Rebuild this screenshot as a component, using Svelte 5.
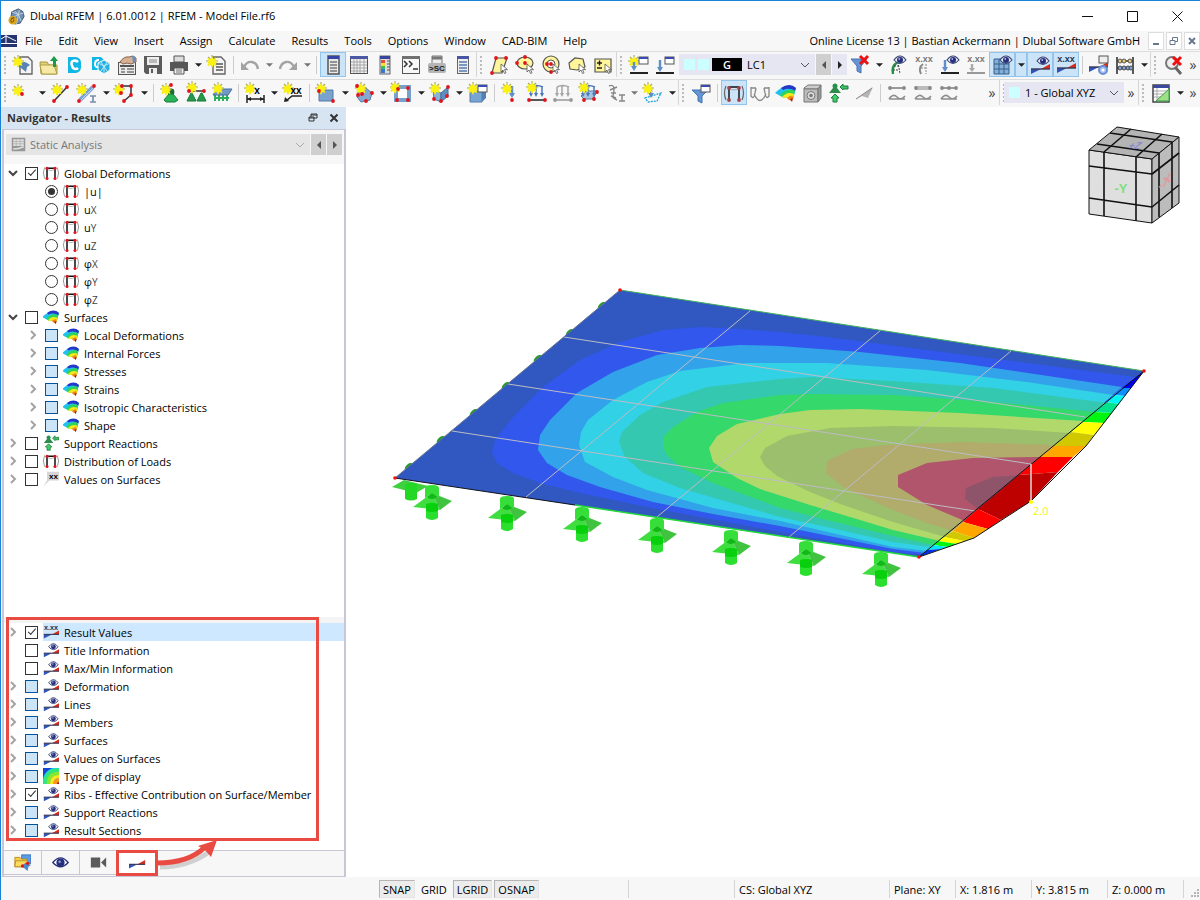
<script>
  const star = (x, y) =>
    `<path d="M${x} ${y - 6}v12M${x - 6} ${y}h12M${x - 4} ${y - 4}l8 8M${x + 4} ${y - 4}l-8 8" stroke="#a8a25a" stroke-width="1.100"/><path d="M${x} ${y - 5}l1.400 3 3-1-1 3 2 1-2 1 1 3-3-1-1.400 3-1.400-3-3 1 1-3-2-1 2-1-1-3 3 1z" fill="#fbf212"/>`;
  const dot = (x, y, c = '#e0141c') => `<circle cx="${x}" cy="${y}" r="1.900" fill="${c}"/>`;
  const line = (d, c = '#333', w = 1.5) => `<path d="${d}" fill="none" stroke="${c}" stroke-width="${w}"/>`;
  const fill = (d, c, s = 'none') => `<path d="${d}" fill="${c}" stroke="${s}"/>`;
  const win = (x, y) =>
    `<rect x="${x}" y="${y}" width="9" height="7" fill="#fff" stroke="#555"/><rect x="${x}" y="${y}" width="9" height="2" fill="#3949b8"/>`;
  const eye = (x, y) =>
    `<path d="M${x - 6} ${y}q6-8 12 0q-6 7-12 0z" fill="#e9ebf6" stroke="#3a4276" stroke-width="1.100"/><circle cx="${x}" cy="${y}" r="3" fill="#26307a"/><circle cx="${x - 0.7}" cy="${y - 1}" r=".9" fill="#aab4ea"/>`;
  const wedge = (x, y) =>
    fill(`M${x} ${y}h10l-10 5z`, '#2f55bd') + fill(`M${x + 10} ${y}l9-5v5z`, '#d92b1a') + line(`M${x} ${y}h19`, '#3a3a55', 1.4);
  const xxx = (x, y, c = '#444') =>
    `<text x="${x}" y="${y}" font-size="9" font-weight="700" fill="${c}" text-anchor="middle" font-family="Liberation Sans">x.xx</text>`;
  const cursor = (x, y) => `<path d="M${x} ${y}v8l2-2 1.5 3.5 1.5-.7-1.5-3.2h3z" fill="#fff" stroke="#555" stroke-width=".8"/>`;
  const yel = (d) => `<path d="${d}" fill="#fff59a" stroke="#555" stroke-width="1.2"/>`;
  const frameShape = (c = '#111', side = '#999') =>
    line('M4 5q-3 7 0 14M20 5q3 7 0 14', side, 1.2) + line('M7 19V6M17 6v13M7 6h10', c, 1.9) + line('M8 8q4 2 8 0', '#aaa', 1);
  const rainbow =
    fill('M1 12Q8 5 13 5q5-1 9 2l-3 11q-5-2-9-1z', '#1fc2ee') +
    fill('M7 7q4-3 8-3t7 3l-1 3q-6-4-12-1z', '#2638c8') +
    fill('M6 14q5-5 9-5 4-1 6 1l-2 8q-5-2-9-1z', '#2fd357') +
    fill('M8 16q4-4 7-4t5 1l-1 5q-5-2-9-1z', '#f3ea1c') +
    fill('M13 17q3-3 6-2l-1 5-3-1z', '#f58418') +
    fill('M16 18l3-1-1 4z', '#b51a1a');
  const support =
    `<circle cx="9" cy="5" r="2.500" fill="#24924a"/>` + fill('M3 12l4-5h4l4 5z', '#2e8c4c') +
    fill('M14 6l3-3v2h5v3h-5v1z', '#3fc168', '#1d7b3a') + fill('M9 13l4 4h-2v4H7v-4H5z', '#3fd06c', '#1d7b3a');
  const loads = (c = '#4a78b8') =>
    line('M6 6q5-3 12 0M6 6v8M11 5v9M17 6v8', c, 1.5) + fill('M4 12h4l-2 4zM9 12h4l-2 4zM15 12h4l-2 4z', c);
  const diag = (m) => line('M4 7h16', '#999', 2) + m + line('M4 18q4-6 8-2t8-1M4 18h16', '#8d8d8d', 1.6);
  const sheet = (x = 8) => `<path d="M${x} 4h8l4 4v13h-12z" fill="#f4f4f4" stroke="#666" stroke-width="1.4"/>`;
  const mark = (x, y, t) => `<text x="${x}" y="${y}" font-size="10" font-weight="700" font-family="Liberation Sans" text-anchor="middle">${t}</text>`;

  const icons = {
    new: sheet(9) + fill('M6 13q6-6 10-3l3 2-3 2-1 5-5-4z', '#5784b4') + star(7, 8),
    open: fill('M3 9h7l2 3h8v9H4z', '#e3d173', '#a8983f') + fill('M3 12h14l3 9H5z', '#f5e9a5', '#b0a04b') + fill('M17 3l4 5h-2v6h-3V8h-3z', '#1c9a4a'),
    center: fill('M5 4h8q5 1 5 6v4q0 5-5 6H5z', '#10b6e4') + line('M15 9q-2-2-5-1t0 7q3 2 5 0', '#fff', 2.6),
    globe: fill('M3 4h9l4 4-3 9H3z', '#10b6e4') + line('M10 7q-4 0-4 4t4 3', '#fff', 2) + fill('M15 7l6 3v7l-6 4-6-4v-7z', '#27afe0', '#fff') + line('M9 10l6 3 6-3M15 13v8M12 9l6 9M18 9l-6 9', '#c9effc', 0.9),
    hand: `<rect x="3.500" y="9.500" width="17" height="12" fill="#ececec" stroke="#555"/>` + line('M5 13h14', '#555', 2) + line('M6 16h4M6 19h4M12 16h7M12 19h7', '#777', 1.3) + fill('M5 9q4-6 9-5l4-1 3 2v4l-5 2-4-1-4 1z', '#d8b093', '#84644e') + fill('M17 3l4 1v5l-3 1z', '#6b8eb8'),
    save: fill('M3 3h18v18H5l-2-2z', '#5b5b5b') + fill('M6 4h12v8H6zM8 15h8v6H8z', '#eee') + line('M8 7h8M8 9h8', '#888', 1) + fill('M10 16h2v4h-2z', '#5b5b5b'),
    print: fill('M7 3h10v6H7z', '#ddd', '#555') + fill('M3 9h18v9H3z', '#565656') + fill('M7 15h10v6H7z', '#eee', '#555') + line('M9 17h6M9 19h6', '#777', 1),
    report: sheet(8) + line('M11 11h7M11 14h7M11 17h7', '#555', 1.3) + star(7, 8),
    undo: line('M6 14q3-6 8-5t6 7', '#a3a3a3', 2.4) + fill('M3 9v8h8z', '#a3a3a3'),
    redo: line('M18 14q-3-6-8-5t-6 7', '#a3a3a3', 2.4) + fill('M21 9v8h-8z', '#a3a3a3'),
    nav: `<rect x="7" y="3" width="11" height="18" fill="#e8e8e8" stroke="#555" stroke-width="1.5"/><rect x="7" y="3" width="11" height="3" fill="#3545a5"/>` + line('M9 9h7M9 12h7M9 15h7M9 18h7', '#777', 1.4),
    table: `<rect x="3.500" y="3.500" width="17" height="17" fill="#f1f1f1" stroke="#555"/><rect x="3" y="3" width="18" height="3" fill="#4d59a5"/>` + line('M4 9h16M4 12h16M4 15h16M4 18h16M7 6v14M10 6v14M13 6v14M17 6v14', '#999', 0.8),
    panel: `<rect x="7" y="3" width="10" height="18" fill="#ddd" stroke="#666"/><rect x="7" y="3" width="10" height="3" fill="#39459b"/>` + fill('M8 7h4v3H8z', '#e54a3c') + fill('M8 10h4v3H8z', '#f3df35') + fill('M8 13h4v3H8z', '#39bd57') + fill('M8 16h4v4H8z', '#3978d2') + line('M14 8h3M14 11h3M14 14h3M14 17h3', '#555', 1.2),
    console: `<rect x="3.500" y="3.500" width="17" height="17" fill="#f7f7f7" stroke="#555"/><rect x="3" y="3" width="18" height="3" fill="#707070"/>` + line('M5 8l3 3-3 3M10 8l3 3-3 3M14 16h5', '#333', 1.5),
    script: fill('M7 3h10v8H7z', '#eee', '#777') + line('M7 5h10', '#777', 3) + `<rect x="3" y="10" width="18" height="10" rx="2" fill="#b5b5b5"/>` + `<text x="12" y="18" font-size="8" font-weight="700" text-anchor="middle" fill="#222" font-family="Liberation Sans">&gt;SC</text>`,
    list: `<rect x="6.500" y="3.500" width="11" height="17" fill="#eee" stroke="#666"/><rect x="6" y="3" width="12" height="3" fill="#4954a5"/>` + line('M8 9h8M8 12h8M8 15h8M8 18h8', '#5679b0', 1.4),
    selRhomb: yel('M9 5h11l-5 15H5z') + dot(9, 5) + dot(19, 5) + dot(5, 20) + cursor(14, 11),
    selEllipse: `<ellipse cx="12" cy="10" rx="8" ry="6" fill="#fff59a" stroke="#555" stroke-width="1.2"/>` + dot(4, 10) + dot(12, 4) + dot(12, 10) + cursor(14, 11),
    selRing: `<circle cx="12" cy="11" r="8" fill="#fff59a" stroke="#555" stroke-width="1.2"/><circle cx="12" cy="11" r="4" fill="#fff" stroke="#555"/>` + dot(12, 11) + dot(8, 11) + dot(12, 19) + cursor(14, 11),
    selPoly: yel('M4 10l6-5 8 1 2 8-8 3-7-1z') + cursor(14, 11),
    selPlus: yel('M4 6h16v13H4z') + line('M6 10h5M8.500 7.500v5M6 15h5', '#222', 1.4) + cursor(14, 11),
    loadNew: star(7, 8) + line('M7 9v7', '#5f8fc8', 2.4) + fill('M4 13h6l-3 5z', '#5f8fc8') + line('M3 20h18', '#222', 2) + win(12, 4),
    load: line('M7 7v10', '#5f8fc8', 2.4) + fill('M4 14h6l-3 5z', '#5f8fc8') + line('M3 20h18', '#222', 2) + win(12, 4),
    filterX: fill('M3 6h16l-6 7v7l-4-2v-5z', '#6495d6', '#4775ae') + line('M12 3l8 8M20 3l-8 8', '#ee1010', 3),
    viewLoad: line('M12 9q-7 4-5 12', '#1d9444', 2.4) + `<path d="M12 9l2 12M8 13h5M7 17h6" fill="none" stroke="#444" stroke-dasharray="2 1"/>` + eye(14, 7),
    valLoad: xxx(12, 9, '#777') + line('M11 11q-5 4-2 10', '#888', 2) + `<path d="M14 11v10M9 15h5" fill="none" stroke="#888" stroke-dasharray="2 1"/>`,
    eyeDown: line('M7 7v10', '#5f8fc8', 2.4) + fill('M4 14h6l-3 5z', '#5f8fc8') + line('M3 20h18', '#222', 2) + eye(15, 7),
    valDown: xxx(12, 9, '#777') + line('M8 11v6', '#aaa', 2.4) + fill('M5 15h6l-3 4z', '#aaa') + line('M3 20h18', '#999', 2),
    gridEye: `<rect x="4" y="6" width="15" height="15" fill="#85afd6"/>` + line('M4 6h15v15H4zM9 6v15M14 6v15M4 11h15M4 16h15', '#35618f', 1) + eye(16, 7),
    wedgeEye: wedge(3, 16) + eye(15, 8),
    wedgeVal: wedge(3, 15) + xxx(12, 9, '#16375a'),
    wedgeGear: wedge(2, 14) + `<rect x="12" y="3" width="9" height="7" fill="#eee" stroke="#555"/><circle cx="16" cy="17" r="4" fill="#a9c5f2" stroke="#698ed2" stroke-width="2"/><circle cx="16" cy="17" r="1.500" fill="#fff"/>`,
    abacus: line('M4 4v17M20 4v17M4 8h16M4 15h16', '#333', 1.6) + [7, 11, 17].map((x) => `<circle cx="${x}" cy="8" r="2" fill="#e8ca75" stroke="#555"/>`).join('') + [7, 11, 15, 18].map((x) => `<circle cx="${x}" cy="15" r="2" fill="#86a5db" stroke="#444"/>`).join(''),
    zoomX: `<circle cx="11" cy="10" r="6" fill="#eee" stroke="#777" stroke-width="2"/>` + line('M14 14l6 7', '#666', 3) + line('M12 4l8 8M20 4l-8 8', '#ee1010', 3),
    node: star(7, 9) + dot(11, 13),
    lineNew: line('M5 20L18 6', '#333', 1.5) + star(8, 8) + dot(5, 20) + dot(18, 6),
    member: line('M5 19L18 6', '#79a1d5', 4) + line('M6 19L18 7', '#c6dbf2', 1) + dot(4, 20) + dot(19, 5) + star(7, 8) + line('M15 15h6M18 15v6M15 21h6', '#7b8fae', 1.7),
    polyline: line('M8 12V5h10v9L11 20', '#333', 1.5) + star(6, 8) + dot(8, 12) + dot(9, 5) + dot(18, 5) + dot(18, 14) + dot(11, 20),
    supNode: `<circle cx="13" cy="11" r="3.400" fill="#1c6b38"/>` + fill('M6 19l5-6h4l5 6-3 2H8z', '#27b557', '#167b37') + star(8, 8) + dot(13, 4),
    supLine: fill('M3 20l4-8h1l4 8zM13 20l4-8h1l4 8z', '#26984a', '#167b37') + line('M5 10h15', '#333', 1.5) + star(8, 6) + dot(5, 10) + dot(20, 10),
    supSurf: line('M5 14v6M9 14v6M13 14v6M17 14v6M4 17h15', '#2fae59', 2) + fill('M7 8h15l-4 6H3z', '#7199c9', '#466e9f') + star(8, 7),
    dim: line('M4 14v8M21 14v8M4 18h17', '#222', 1.5) + fill('M4 18l4-2v4zM21 18l-4-2v4z', '#222') + star(7, 7) + mark(14, 13, 'x'),
    dimXX: line('M5 20l6-5h10', '#222', 1.5) + fill('M3 21l1-5 4 4z', '#222') + star(7, 7) + mark(15, 13, 'xx'),
    surface: fill('M5 9h14v11H5z', '#79a2cf', '#557ba8') + star(7, 7) + dot(5, 10) + dot(19, 20),
    surfFree: fill('M6 10l8-3 6 5-2 7-9 2-4-5z', '#85aad2', '#557ba8') + star(9, 7) + dot(5, 5) + dot(10, 13) + dot(20, 12) + dot(14, 20) + dot(6, 14),
    opening: `<rect x="6" y="6" width="13" height="13" fill="#fff" stroke="#76a1cd" stroke-width="4"/>` + star(5, 6) + dot(8, 8) + dot(18, 7) + dot(7, 19) + dot(18, 19),
    solid: fill('M5 9l8 3v9l-7-3z', '#8ab2d6', '#537da8') + fill('M13 12l7-6v9l-7 6z', '#5e8ebf', '#426c9a') + star(7, 7) + dot(6, 18) + dot(20, 6) + dot(13, 20) + dot(19, 15),
    cube: fill('M4 10h12v11H4z', '#78a5d3', '#527da8') + fill('M16 10l4-3v10l-4 4z', '#5080b4') + star(7, 7) + win(12, 4),
    nodalLoad: line('M13 5v10', '#5f8fc8', 2.5) + fill('M10 12h6l-3 5z', '#5f8fc8') + star(8, 7) + dot(13, 19),
    memberLoad: loads() + line('M4 19h16', '#222', 1.5) + dot(4, 19) + dot(20, 19) + star(7, 6),
    memberLoadOff: loads('#a5a5a5') + line('M4 19h16', '#999', 1.5) + dot(4, 19, '#999') + dot(20, 19, '#999'),
    surfLoad: fill('M4 15l5-5h11l-4 8H7z', '#a8c6e4', '#547ca9') + loads() + star(7, 6) + dot(7, 19) + dot(17, 18) + dot(20, 11),
    wind: line('M6 5q5-2 5 3t-1 7 4 4M7 9l7-3M8 12h5M8 15l5 2', '#888', 1.4) + line('M16 14h6M19 14v6M16 20h6', '#888', 1.5),
    freeLoad: line('M10 7v7', '#5f8fc8', 2.4) + fill('M7 12h6l-3 5z', '#5f8fc8') + `<path d="M4 17l16-5-4 8-9 1z" fill="none" stroke="#1da2d5" stroke-width="1.300" stroke-dasharray="2 1"/>` + star(7, 7),
    filterWin: fill('M3 9h16l-6 6v7l-4-2v-5z', '#6495d6', '#4775ae') + win(12, 4),
    frame: frameShape() + dot(7, 6) + dot(17, 6) + dot(7, 19) + dot(17, 19),
    deform: frameShape('#3d424b', '#666') + [[7, 7], [17, 7], [7, 19], [17, 19]].map(([x, y]) => dot(x, y, '#a04048')).join(''),
    curve: line('M3 6v9q3 4 4-3l1-5M21 6v9q-3 4-4-3l-1-5M3 7h5M16 7h5M6 13q6 13 12 0', '#888', 1.3),
    rainbow,
    dice: fill('M4 7l4-3h13l-3 4H4z', '#ccc', '#777') + fill('M4 8h14v13H4z', '#bcbcbc', '#777') + fill('M18 8l3-4v13l-3 4z', '#999', '#777') + `<circle cx="11" cy="14.500" r="4" fill="#ddd" stroke="#777"/><circle cx="11" cy="14.500" r="1.800" fill="#777"/>`,
    support,
    plane: fill('M3 19L21 6l-5 11-6-2z', '#b5b5b5') + line('M4 18L20 7', '#8a8a8a', 1),
    diagA: diag(dot(5, 7, '#888') + dot(19, 7, '#888')),
    diagB: diag(fill('M4 5h16v4H4z', '#bbb') + dot(5, 7, '#888') + dot(19, 7, '#888')),
    diagC: diag([5, 12, 19].map((x) => dot(x, 7, '#888')).join('')),
    tableTri: `<rect x="4" y="4" width="16" height="17" fill="#fff" stroke="#444" stroke-width="1.500"/><rect x="4" y="4" width="16" height="3" fill="#3949a0"/>` + line('M5 10h14M5 13h14M5 16h14M8 7v13', '#aaa', 1) + fill('M7 20L20 8v12z', '#9ee08a', '#3f9e48'),
    valFlag: fill('M2 22L7 14V3h15v11H10z', '#d6d6d6') + mark(15, 12, 'xx'),
    display: fill('M0 0h24v24H0z', '#13d6f2') + `<g fill="none" stroke-width="5"><path d="M3 24Q3 3 24 3" stroke="#35e47a"/><path d="M8 24Q8 8 24 8" stroke="#85ea28"/><path d="M13 24Q13 13 24 13" stroke="#ffe71c"/><path d="M18 24Q18 18 24 18" stroke="#ff9418"/></g>` + fill('M0 0h14Q2 5 0 16z', '#1746d3') + fill('M21 24q0-3 3-3v3z', '#c0111d'),
    analysis: fill('M3 3h18v18H3z', '#777') + fill('M5 5h14v9H5z', '#ddd') + line('M5 8h14M5 11h14M9 5v9M14 5v9', '#999', 1) + line('M5 18q7 0 14-3', '#ddd', 2),
    project: fill('M11 3h11v10H11z', '#5b9be8', '#336eaf') + fill('M3 6h6l2 2h6v9H3z', '#f7cc46', '#b4861e') + fill('M4 10h14v7H3z', '#ffdc60', '#b4861e') + fill('M11 16l5-4 6 3-3 2-1 5z', '#4d88c8') + dot(12, 16) + dot(18, 13),
    eye: `<path d="M3 12q9-11 18 0q-9 10-18 0z" fill="#fff" stroke="#26307a" stroke-width="1.600"/><circle cx="12" cy="12" r="4.800" fill="#26307a"/><circle cx="11" cy="11" r="1.500" fill="#8b9be3"/>`,
    camera: fill('M3 6h11v12H3zM15 12l6-6v12z', '#5b5b5b'),
    wedge: wedge(2, 13)
  };

  // Toolbar rows: icon names, "v" = menu arrow, "|" = divider, "!" = pressed
  const rowOneA = 'new open center globe hand save print v report | undo vg redo vg | !nav table panel console script list'.split(' ');
  const rowOneB = ['selRhomb', 'selEllipse', 'selRing', 'selPoly', 'selPlus'];
  const rowOneC = ['loadNew', 'load'];
  const rowOneD = 'filterX v viewLoad valLoad eyeDown valDown !gridEye !v !wedgeEye !wedgeVal | wedgeGear abacus v'.split(' ');
  const rowTwoA = 'node v lineNew member v polyline v | supNode supLine supSurf | dim v dimXX | surface v surfFree v opening v solid v cube | nodalLoad memberLoad memberLoadOff surfLoad wind vg freeLoad v'.split(' ');
  const rowTwoB = 'filterWin | !deform curve rainbow dice support plane | diagA diagB diagC'.split(' ');

  const menus = ['File', 'Edit', 'View', 'Insert', 'Assign', 'Calculate', 'Results', 'Tools', 'Options', 'Window', 'CAD-BIM', 'Help'];

  const node = (label, icon, check, arrow = 'closed', level = 0, sub = '') => ({ label, icon, check, arrow, level, sub });
  const results = [
    node('Global Deformations', 'frame', 'on', 'open'),
    node('|u|', 'frame', 'radio-on', '', 1),
    node('u', 'frame', 'radio', '', 1, 'X'),
    node('u', 'frame', 'radio', '', 1, 'Y'),
    node('u', 'frame', 'radio', '', 1, 'Z'),
    node('φ', 'frame', 'radio', '', 1, 'X'),
    node('φ', 'frame', 'radio', '', 1, 'Y'),
    node('φ', 'frame', 'radio', '', 1, 'Z'),
    node('Surfaces', 'rainbow', 'off', 'open'),
    ...['Local Deformations', 'Internal Forces', 'Stresses', 'Strains', 'Isotropic Characteristics', 'Shape'].map((t) => node(t, 'rainbow', 'part', 'closed', 1)),
    node('Support Reactions', 'support', 'off'),
    node('Distribution of Loads', 'frame', 'off'),
    node('Values on Surfaces', 'valFlag', 'off')
  ];
  const options = [
    { ...node('Result Values', 'wedgeVal', 'on'), selected: true },
    node('Title Information', 'wedgeEye', 'off', ''),
    node('Max/Min Information', 'wedgeEye', 'off', ''),
    ...['Deformation', 'Lines', 'Members', 'Surfaces', 'Values on Surfaces'].map((t) => node(t, 'wedgeEye', 'part')),
    node('Type of display', 'display', 'part'),
    node('Ribs - Effective Contribution on Surface/Member', 'wedgeEye', 'on'),
    node('Support Reactions', 'wedgeEye', 'part'),
    node('Result Sections', 'wedgeEye', 'part')
  ];

  // Isobands on the plate, outermost first
  const bands = [
    ['#3257ed', '1144,371 1135,377 1027,363 927,350 827,337 780,332 740,329 700,327 663,330 620,342 580,360 543,387 513,417 495,440 492,453 497,463 513,473 540,483 580,493 647,507 780,532 893,552 922,555'],
    ['#32a3ea', '1122,387 960,363 860,352 780,346 740,345 700,348 657,355 613,372 577,393 550,420 540,435 538,450 547,463 567,475 600,487 653,502 713,514 780,526 893,549 925,553'],
    ['#32d1e6', '1113,395 1027,382 927,370 827,363 747,363 680,371 647,382 613,400 588,420 581,432 579,445 585,462 613,477 647,490 713,508 780,521 893,547 927,551'],
    ['#34c8b0', '1107,403 993,388 893,381 810,377 780,379 707,387 663,402 640,415 622,432 619,442 625,457 643,473 680,488 780,517 827,527 893,542 930,547'],
    ['#34d86b', '1094,412 993,402 893,395 810,394 780,395 723,403 697,412 673,427 663,437 663,447 667,455 680,467 713,483 780,508 827,520 893,536 933,545'],
    ['#b1d86b', '1083,421 960,413 860,409 810,410 780,414 737,424 717,436 709,448 713,462 737,478 760,489 810,505 860,520 893,530 940,541'],
    ['#9bbf6c', '1070,433 993,428 893,426 830,428 787,436 765,448 760,457 765,466 777,476 810,492 843,505 893,522 945,537'],
    ['#b1ac6b', '1055,445 960,442 887,445 852,449 827,461 826,473 843,487 860,495 893,510 927,523 953,531'],
    ['#b0556b', '1040,457 973,458 927,463 898,475 898,487 927,505 967,522'],
    ['#8e556a', '1020,475 993,477 966,488 965,499 978,509']
  ];
  // Cuts across the displaced free edge: plate side to outer side
  const cuts = [
    [1144, 371, 1144, 371], [1122, 388, 1131, 388], [1114, 395, 1125, 396], [1107, 402, 1119, 404], [1094, 412, 1112, 413],
    [1083, 422, 1104, 423], [1071, 432, 1094, 435], [1054, 446, 1086, 446], [1040, 457, 1073, 457], [1019, 475, 1058, 472],
    [978, 509, 1001, 520], [963, 522, 988, 529], [953, 531, 974, 538], [944, 537, 964, 541], [938, 541, 957, 544],
    [933, 545, 948, 547], [927, 550, 941, 549], [919, 557, 919, 557]
  ];
  const cutColors = ['#0000f0', '#0a90ff', '#00f4f4', '#00e28e', '#00f510', '#ffff00', '#d2c800', '#ffa600', '#ff0000', '#bd0000', '#ff0000', '#ffa600', '#d2c800', '#ffff00', '#00f510', '#00e8f4', '#0030ec'];
  const cells = cutColors.map((color, i) => {
    const a = cuts[i];
    const b = cuts[i + 1];
    const mid = i === 9 ? ' 1031,501' : '';
    return { color, points: `${a[0]},${a[1]} ${a[2]},${a[3]}${mid} ${b[2]},${b[3]} ${b[0]},${b[1]}` };
  });
  const supports = [[432, 485], [507, 496], [582, 507], [657, 518], [731, 530], [806, 541], [881, 552]];
  const bumps = [[602, 306], [570, 333], [538, 359], [506, 386], [474, 413], [441, 440], [409, 467]];
</script>

{#snippet tools(items)}
  {#each items as item}
    {@const pressed = item.startsWith('!')}
    {@const name = item.replace('!', '')}
    {#if name === '|'}
      <span class="divider"></span>
    {:else if name === 'v' || name === 'vg'}
      <button class="drop" class:pressed class:dim={name === 'vg'} aria-label="More"><svg viewBox="0 0 8 4"><path d="M0 0h8L4 4z" /></svg></button>
    {:else}
      <button class="tool" class:pressed aria-label={name}><svg viewBox="0 0 24 24">{@html icons[name]}</svg></button>
    {/if}
  {/each}
{/snippet}

{#snippet tree(items, name)}
  <ul class="tree">
    {#each items as it, i}
      <li class:nested={it.level}>
        <button class="twist {it.arrow}" aria-label="Expand" tabindex={it.arrow ? 0 : -1}>
          {#if it.arrow}<svg viewBox="0 0 12 12"><path d={it.arrow === 'open' ? 'M1 4l4 4 4-4' : 'M3 2l4 4-4 4'} /></svg>{/if}
        </button>
        {#if it.check.startsWith('radio')}
          <input type="radio" id="{name}{i}" name="component" checked={it.check === 'radio-on'} />
        {:else}
          <input type="checkbox" id="{name}{i}" class:part={it.check === 'part'} checked={it.check === 'on'} />
        {/if}
        <label for="{name}{i}" class:selected={it.selected}>
          <svg viewBox={it.icon === 'display' ? '0 0 24 24' : '2 2 20 20'}>{@html icons[it.icon]}</svg>
          <span>{it.label}{#if it.sub}<span class="sub">{it.sub}</span>{/if}</span>
        </label>
      </li>
    {/each}
  </ul>
{/snippet}

<div class="app">
  <header class="title">
    <svg class="logo" viewBox="0 0 18 18">
      <path d="M4 4l7-3 5 3 1 5-4 7-6 1-4-6z" fill="#6f8fb0" stroke="#39506c" />
      <path d="M4 4l7 3 6-2M11 7l-2 10M3 11l8-4 3 7M7 3l4 4 1-5" fill="none" stroke="#d6e4f0" stroke-width=".8" />
      <circle cx="5" cy="13" r="4.500" fill="#dda820" />
      <path d="M7 10q-4 0-4 3t2 2 1-3-2 0" fill="none" stroke="#754e08" />
    </svg>
    <h1>Dlubal RFEM | 6.01.0012 | RFEM - Model File.rf6</h1>
    <button aria-label="Minimize"><svg viewBox="0 0 11 11"><path d="M0 5.500h11" /></svg></button>
    <button aria-label="Maximize"><svg viewBox="0 0 11 11"><path d="M.5.5h10v10H.5z" /></svg></button>
    <button aria-label="Close"><svg viewBox="0 0 11 11"><path d="M.5.5l10 10M10.500.5l-10 10" /></svg></button>
  </header>

  <nav class="menu">
    <svg class="badge" viewBox="0 0 16 12"><path d="M0 0h16v12H0z" fill="#25336f" /><path d="M0 8.500h16M5 0v8M0 4l5-3 10 5" stroke="#fff" fill="none" stroke-width="1" /></svg>
    {#each menus as m}<button>{m}</button>{/each}
    <span class="license">Online License 13 | Bastian Ackermann | Dlubal Software GmbH</span>
    <span class="mdis">
      <button class="mdi" aria-label="Minimize model"><svg viewBox="0 0 10 10"><path d="M2 8h6" stroke-width="2" /></svg></button>
      <button class="mdi" aria-label="Restore model"><svg viewBox="0 0 10 10"><path d="M1 4.500h5v4H1zM3.500 4V1.500h5v4H6" /></svg></button>
      <button class="mdi" aria-label="Close model"><svg viewBox="0 0 10 10"><path d="M2 2l6 6M8 2L2 8" stroke-width="2" /></svg></button>
    </span>
  </nav>

  <div class="bar">
    <div class="group">{@render tools(rowOneA)}</div>
    <div class="group">{@render tools(rowOneB)}</div>
    <div class="group grow">
      {@render tools(rowOneC)}
      <div class="case">
        <i></i><i></i><b>G</b>
        <select aria-label="Load case"><option>LC1</option></select>
        <svg viewBox="0 0 10 6"><path d="M1 1l4 4 4-4" /></svg>
      </div>
      <button class="step off" aria-label="Previous"><svg viewBox="0 0 4 8"><path d="M4 0v8L0 4z" /></svg></button>
      <button class="step" aria-label="Next"><svg viewBox="0 0 4 8"><path d="M0 0v8l4-4z" /></svg></button>
      {@render tools(rowOneD)}
    </div>
    <div class="group">{@render tools(['zoomX'])}<button class="more">»</button></div>
  </div>

  <div class="bar">
    <div class="group">{@render tools(rowTwoA)}</div>
    <div class="group grow">{@render tools(rowTwoB)}<button class="more last">»</button></div>
    <div class="group">
      <div class="case axes">
        <i></i>
        <select aria-label="Coordinate system"><option>1 - Global XYZ</option></select>
        <svg viewBox="0 0 10 6"><path d="M1 1l4 4 4-4" /></svg>
      </div>
      <button class="more">»</button>
    </div>
    <div class="group">{@render tools(['tableTri', 'v'])}<button class="more">»</button></div>
  </div>

  <div class="work">
    <aside>
      <div class="head">
        <h2>Navigator - Results</h2>
        <button aria-label="Float"><svg viewBox="0 0 10 10"><path d="M1 4h5v4H1zM3 4V1h6v4H6M3 2h6M1 5h5" /></svg></button>
        <button aria-label="Close navigator"><svg viewBox="0 0 10 10"><path d="M1.500 1.500l7 7M8.500 1.500l-7 7" stroke-width="2" /></svg></button>
      </div>
      <div class="panel">
        <div class="analysis">
          <div class="pick">
            <svg class="pic" viewBox="2 2 20 20">{@html icons.analysis}</svg>
            <select aria-label="Analysis" disabled><option>Static Analysis</option></select>
            <svg class="chev" viewBox="0 0 10 6"><path d="M1 1l4 4 4-4" /></svg>
          </div>
          <button class="step off" aria-label="Previous analysis"><svg viewBox="0 0 4 8"><path d="M4 0v8L0 4z" /></svg></button>
          <button class="step off" aria-label="Next analysis"><svg viewBox="0 0 4 8"><path d="M0 0v8l4-4z" /></svg></button>
        </div>
        <div class="upper">{@render tree(results, 'result')}</div>
        <div class="lower">{@render tree(options, 'option')}<div class="callout"></div></div>
        <div class="tabs">
          {#each ['project', 'eye', 'camera', 'wedge'] as t}
            <button class:marked={t === 'wedge'} aria-label={t}><svg viewBox="2 2 20 20">{@html icons[t]}</svg></button>
          {/each}
          <svg class="arrow" viewBox="0 0 64 36">
            <path d="M1 26q28 0 49-15" fill="none" stroke="#777" stroke-opacity=".3" stroke-width="5" transform="translate(2 2)" />
            <path d="M0 24q32 0 48-16" fill="none" stroke="#e94b43" stroke-width="5" />
            <path d="M60 1l-19 6 7 4 6 7z" fill="#e94b43" />
          </svg>
        </div>
      </div>
    </aside>

    <main>
      <svg class="scene" viewBox="346 107 854 770" preserveAspectRatio="xMinYMin meet">
        <defs>
          <g id="support">
            <path d="M-19 22L0 8l8 17z" fill="#3fdd40" />
            <path d="M0 8l20 8-12 9z" fill="#40c440" />
            <path d="M-7 3q0-3 7-3t7 3v10l-7-5-7 5z" fill="#35de38" />
            <path d="M-5 12L0 8l5 4q-5 4-10 0z" fill="#10b918" />
            <path d="M-6 19q6-2 12 0v14q-6 4-12 0z" fill="#2bdf2e" />
            <path d="M-6 19q6-2 12 0v7q-6 2-12 0z" fill="#08d00c" />
          </g>
        </defs>

        {#each bumps as [x, y]}<ellipse cx={x} cy={y} rx="5" ry="3" fill="#239a2c" transform="rotate(-40 {x} {y})" />{/each}
        <path d="M392 487l12-7 24 6-12 7z" fill="#3fd040" />
        <path d="M405 484q6-2 12 0v15q-6 3-12 0z" fill="#22d825" />
        {#each supports as [x, y]}<use href="#support" {x} {y} />{/each}

        <path d="M620 290L1144 371 919 557 395 478z" fill="#3158c0" />
        {#each bands as [color, points]}<polygon {points} fill={color} />{/each}
        {#each cells as c}<polygon points={c.points} fill={c.color} />{/each}

        <path d="M564 337L1085 417M508 384L1031 464M452 431L975 511M750 311L526 497M881 330L657 517M1011 351L789 537" fill="none" stroke="#bcbcc4" stroke-width="1" />
        <path d="M395 478L620 290" stroke="#68758e" />
        <path d="M620 290L1144 371" stroke="#3fae5c" />
        <path d="M395 478L575 505" stroke="#10131c" />
        <path d="M575 505L919 557" stroke="#22d93c" stroke-width="1.500" />
        <path d="M1144 371L919 557M1144 371L1086 446 1031 501 974 538 919 557" fill="none" stroke="#111" />
        <path d="M1031 464v37" stroke="#ddd" stroke-width="1.500" />
        <g fill="#f01010">
          <circle cx="620" cy="290" r="1.800" /><circle cx="395" cy="478" r="1.800" /><circle cx="1144" cy="371" r="1.800" /><circle cx="919" cy="557" r="1.800" />
        </g>
        <circle cx="1031" cy="502" r="2" fill="#ff0" />
        <text x="1033" y="515" class="value">2.0</text>

        <g stroke="#111" stroke-width="1.500" stroke-linejoin="round">
          <path d="M1089 150l63 9v64l-63-9z" fill="#dfdfdf" stroke-width="1" />
          <path d="M1089 150l28-23 62 10-27 22z" fill="#b4b4b4" stroke-width="1" />
          <path d="M1152 159l27-22v66l-27 20z" fill="#bcbcbc" stroke-width="1" />
          <path d="M1104 152v64M1136 157v64M1089 166l63 8 27-21M1089 198l63 9 27-22M1097 144l62 9v64M1110 133l62 9v66M1104 152l27-23M1136 157l26-23" fill="none" stroke-width="1.600" />
        </g>
        <g class="face">
          <text x="1121" y="193" fill="#7ee07e">-Y</text>
          <text transform="translate(1165 186) skewY(-38)" fill="#e09a9a">-X</text>
          <text transform="translate(1133 149) skewX(-30)" fill="#8585d2" font-size="10">+Z</text>
        </g>
      </svg>
    </main>
  </div>

  <footer>
    <span></span>
    <span class="snaps"><button class="in">SNAP</button><button>GRID</button><button class="in">LGRID</button><button class="in">OSNAP</button></span>
    <span></span><span></span>
    <span>CS: Global XYZ</span>
    <span>Plane: XY</span>
    <span>X: 1.816 m</span>
    <span>Y: 3.815 m</span>
    <span>Z: 0.000 m</span>
    <svg viewBox="0 0 12 12"><path d="M9 1h2v2H9zM6 4h2v2H6zM9 4h2v2H9zM3 7h2v2H3zM6 7h2v2H6zM9 7h2v2H9z" fill="#b5b5b5" /></svg>
  </footer>
</div>

<style>
  :global(body) { margin: 0; background: #f7f7f7; }
  .app { min-height: 100vh; box-sizing: border-box; display: flex; flex-direction: column; border-top: 1px solid #1883d7; border-left: 1px solid #1883d7; background: #f7f7f7; color: #000; font: 11px/18px "Open Sans", "Noto Sans", sans-serif; }
  button { border: 0; padding: 0; margin: 0; background: none; font: inherit; color: inherit; }
  select { appearance: none; border: 0; padding: 0; background: none; font: inherit; color: inherit; flex: 1; min-width: 0; }
  svg { display: block; flex: none; }
  h1, h2 { margin: 0; font-size: 11px; font-weight: 400; }

  .title { display: flex; align-items: center; height: 30px; padding-left: 7px; background: #fff; }
  .logo { width: 17px; height: 17px; }
  .title h1 { flex: 1; padding-left: 5px; }
  .title button { width: 45px; height: 30px; display: grid; place-items: center; }
  .title button svg { width: 11px; height: 11px; fill: none; stroke: #111; }

  .menu { display: flex; align-items: center; height: 20px; gap: 16px; white-space: nowrap; }
  .badge { width: 16px; height: 12px; margin-right: -8px; }
  .license { margin-left: auto; margin-right: -8px; }
  .mdis { display: flex; gap: 2px; }
  .mdi { width: 16px; height: 18px; border: 1px solid #ddd; box-sizing: border-box; background: #fff; display: grid; place-items: center; }
  .mdi svg { width: 10px; height: 10px; fill: none; stroke: #68788c; }

  .bar { display: flex; height: 28px; border-top: 1px solid #ddd; box-sizing: border-box; padding-bottom: 2px; }
  .group { display: flex; align-items: center; border-right: 1px solid #d6d6d6; }
  .group:last-child { border-right: 0; }
  .grow { flex: 1; }
  .group::before { content: ""; width: 2px; height: 18px; margin: 0 4px 0 3px; background: repeating-linear-gradient(#bbb 0 2px, transparent 2px 4px); }
  .tool { width: 26px; height: 25px; display: grid; place-items: center; box-sizing: border-box; }
  .tool svg { width: 24px; height: 24px; }
  .drop { width: 12px; height: 25px; display: grid; place-items: center; box-sizing: border-box; }
  .drop svg { width: 7px; height: 4px; fill: #222; }
  .dim svg { fill: #777; }
  .pressed { background: #cbe4f8; outline: 1px solid #92c4ec; outline-offset: -1px; }
  .divider { width: 1px; height: 18px; margin: 0 3px; background: #ccc; }
  .case { flex: 1; display: flex; align-items: center; height: 21px; padding: 0 5px; margin-left: 1px; background: #e6e5f2; gap: 3px; }
  .case i { width: 11px; height: 11px; background: #ccffff; }
  .case b { width: 30px; margin-right: 2px; background: #000; color: #fff; line-height: 13px; text-align: center; font-weight: 600; }
  .case svg { width: 10px; height: 6px; fill: none; stroke: #555; }
  .axes { width: 110px; flex: none; margin-left: -5px; }
  .axes select { padding-left: 2px; }
  .step { width: 15px; height: 21px; margin-left: 1px; display: grid; place-items: center; background: #e6e5f2; }
  .step.off { background: #cfcfcf; }
  .step svg { width: 4px; height: 8px; fill: #222; }
  .step.off svg { fill: #555; }
  .more { width: 14px; font-size: 14px; color: #444; }
  .last { margin-left: auto; }

  .work { flex: 1; display: flex; }
  aside { width: 345px; display: flex; flex-direction: column; }
  .head { display: flex; align-items: center; height: 22px; padding: 0 7px; gap: 11px; background: #d7e5f2; color: #333; }
  .head h2 { flex: 1; font-weight: 700; margin-left: -1px; }
  .head svg { width: 10px; height: 10px; fill: none; stroke: #333; }
  .panel { flex: 1; display: flex; flex-direction: column; margin-left: 1px; border: 2px solid #c9c7d5; border-width: 1px 2px 1px 2px; }
  .analysis { display: flex; padding: 4px 2px 9px; }
  .pick { flex: 1; display: flex; align-items: center; gap: 4px; height: 21px; padding: 0 5px; background: #e5e5e5; color: #777; }
  .pick select { opacity: 1; }
  .pic { width: 15px; height: 15px; opacity: .7; }
  .chev { width: 10px; height: 6px; fill: none; stroke: #aaa; }

  .upper { flex: 1; background: #fff; }
  .lower { position: relative; background: #fff; border-top: 6px solid #f4f4f4; padding-bottom: 11px; }
  .tree { list-style: none; margin: 0; padding: 0; }
  .tree li { display: flex; align-items: center; height: 18px; gap: 5px; padding-left: 4px; }
  .tree .nested { padding-left: 24px; }
  .twist { width: 12px; height: 12px; }
  .twist svg { width: 12px; height: 12px; fill: none; stroke: #a3a3a3; stroke-width: 2; }
  .twist.open svg { stroke: #444; }
  input { appearance: none; width: 13px; height: 13px; margin: 0; border: 1px solid #333; background: #fff; flex: none; box-sizing: border-box; display: grid; place-items: center; }
  input[type="radio"] { border-radius: 50%; }
  input[type="radio"]:checked::after { content: ""; width: 7px; height: 7px; border-radius: 50%; background: #333; }
  input[type="checkbox"]:checked::after { content: ""; width: 7px; height: 3px; border: 1px solid #333; border-width: 0 0 1px 1px; transform: rotate(-48deg) translate(1px, -1px); }
  .part { background: #cce4f7; border-color: #00539c; }
  .tree label { flex: 1; display: flex; align-items: center; gap: 5px; height: 18px; white-space: nowrap; }
  .tree label svg { width: 16px; height: 16px; }
  .tree label > span { padding-top: 2px; }
  .selected { background: #cde8ff; }
  .sub { font-size: 10px; color: #444; }
  .callout { position: absolute; inset: -6px 25px 9px 2px; border: 3px solid #e94b43; pointer-events: none; }
  .tabs { position: relative; display: flex; height: 24px; border-top: 1px solid #c9c7d5; padding-bottom: 1px; }
  .tabs button { width: 38px; border-right: 1px solid #c9c7d5; border-bottom: 1px solid #c9c7d5; box-sizing: border-box; display: grid; place-items: center; }
  .tabs button svg { width: 17px; height: 17px; }
  .tabs .marked { background: #fff; outline: 3px solid #e94b43; outline-offset: -2px; width: 40px; margin-left: -1px; border: 0; }
  .arrow { position: absolute; left: 153px; top: -12px; width: 64px; height: 36px; }

  main { flex: 1; min-width: 0; background: #fff; display: flex; }
  .scene { width: 100%; height: auto; }
  .value { font-size: 11px; fill: #f5f500; }
  .face { font-weight: 700; font-size: 13px; text-anchor: middle; font-family: "Liberation Sans", sans-serif; }

  footer { display: grid; grid-template-columns: 1fr 160px 90px 106px 155px 66px 76px 76px 76px 16px; height: 23px; align-items: center; white-space: nowrap; }
  footer > span { height: 18px; padding-left: 4px; border-right: 1px solid #d5d5d5; box-sizing: border-box; line-height: 20px; }
  footer > span:first-child { border: 0; }
  footer > .snaps { display: flex; gap: 2px; padding: 0; }
  .snaps button { padding: 0 3px; border: 1px solid transparent; line-height: 17px; }
  .snaps .in { background: #ececec; border-color: #b5b5b5 #e5e5e5 #e5e5e5 #b5b5b5; }
  footer svg { width: 12px; height: 12px; align-self: end; justify-self: end; }
</style>
